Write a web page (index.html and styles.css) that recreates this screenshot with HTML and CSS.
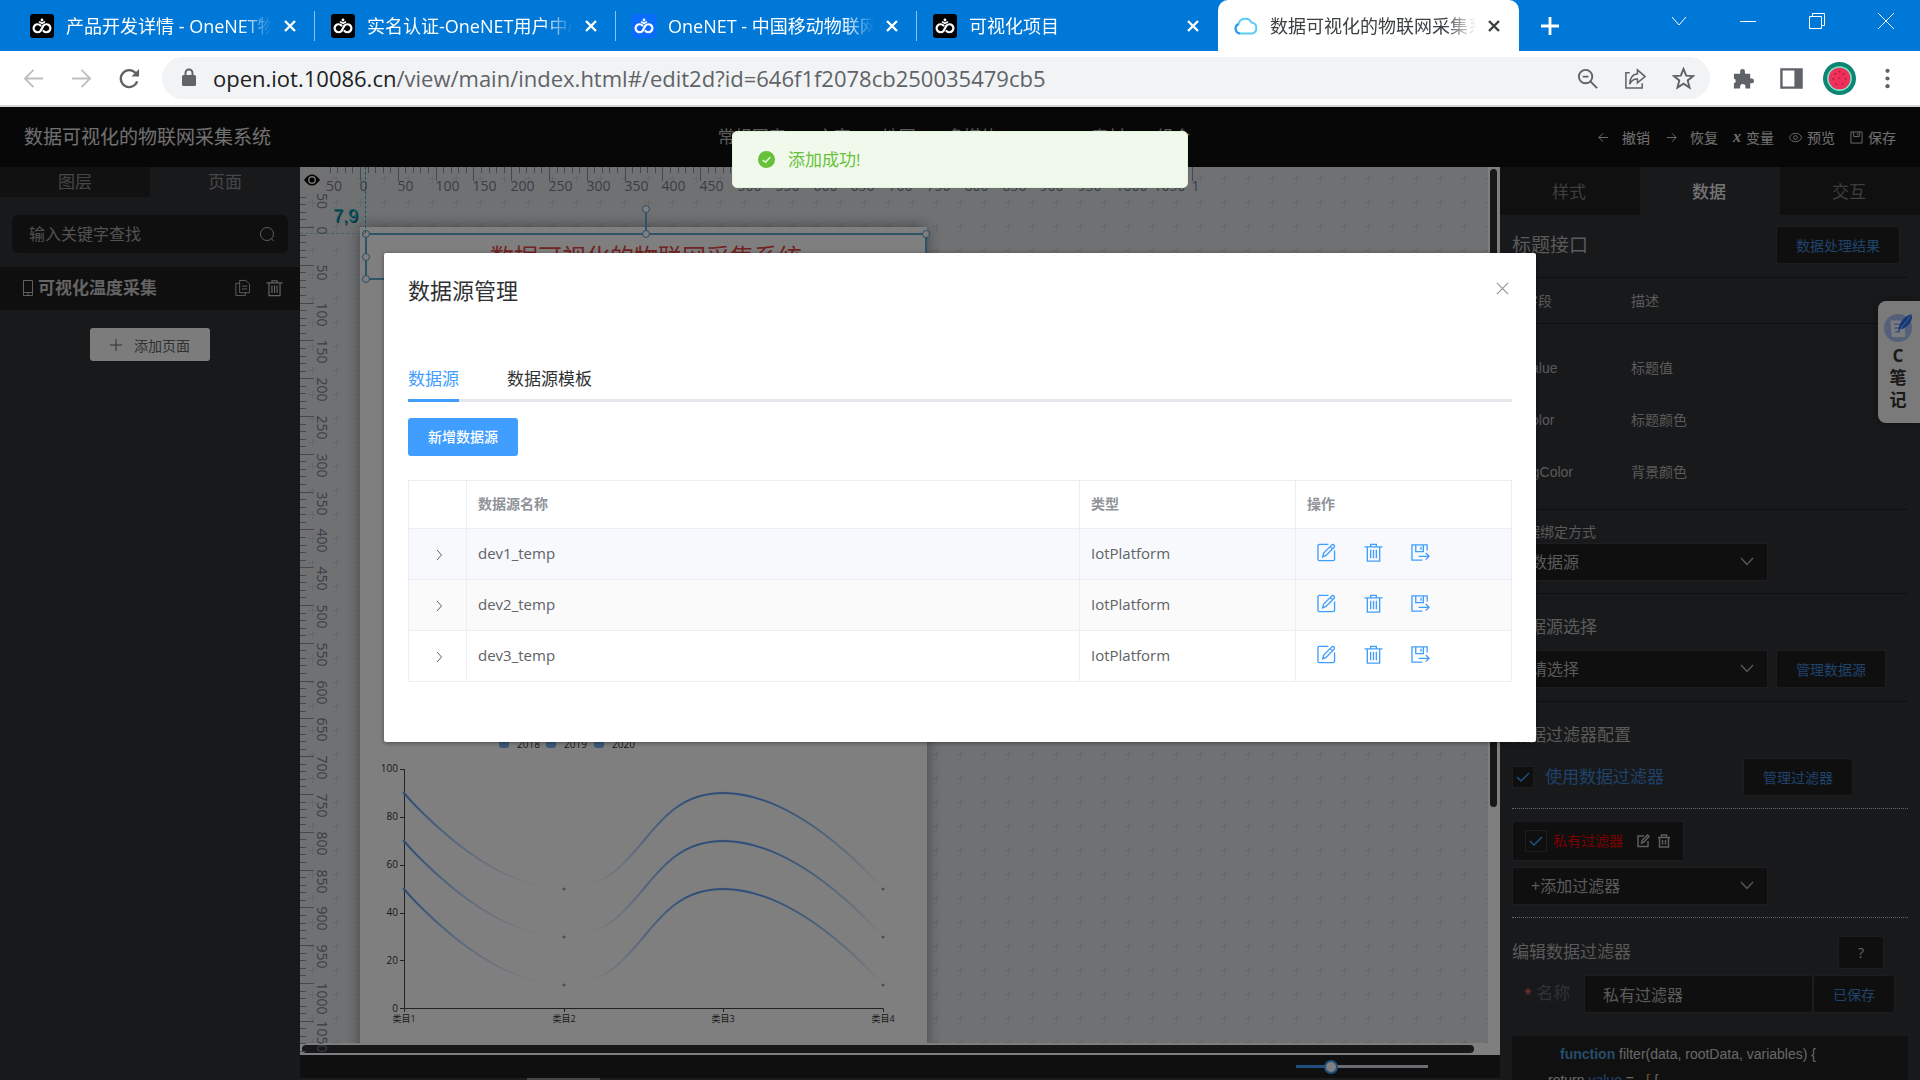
FILE: index.html
```html
<!DOCTYPE html>
<html lang="zh-CN">

<head>
  <meta charset="UTF-8" />
  <meta name="viewport" content="width=device-width, initial-scale=1.0" />
  <title>数据可视化的物联网采集系统</title>
  <link rel="stylesheet" href="styles.css">
</head>

<body>

  <!-- Shared icons -->
  <svg class="sprite" aria-hidden="true">
    <symbol id="i-onenet" viewBox="0 0 24 24">
      <g fill="none" stroke="#fff" stroke-width="2.2" stroke-linecap="round">
        <path d="M10.5 11.5A4 4 0 1 0 10.5 17L13.500 11.500A4 4 0 1 1 13.500 17" />
        <path d="M9.500 8L12 9.500L14.500 8" stroke-width="1.500" />
      </g>
      <circle cx="12" cy="6" r="1.400" fill="#fff" />
    </symbol>
    <symbol id="i-close" viewBox="0 0 16 16">
      <path d="M3 3L13 13M13 3L3 13" fill="none" stroke="currentColor" stroke-width="2.4" />
    </symbol>
    <symbol id="i-thin-close" viewBox="0 0 16 16">
      <path d="M1 1L15 15M15 1L1 15" fill="none" stroke="currentColor" stroke-width="1.4" />
    </symbol>
    <symbol id="i-edit" viewBox="0 0 20 20">
      <g fill="none" stroke="currentColor" stroke-width="1.400">
        <path d="M12 1.500H2.500A1.500 1.500 0 0 0 1 3V17A1.500 1.500 0 0 0 2.500 18.500H17A1.500 1.500 0 0 0 18.500 17V8" />
        <path d="M6 14.500L7 10.500L15.500 2Q17 1 18 2.200Q19 3.500 18 4.500L9.500 13ZM14 3.800L16.500 6.200" />
      </g>
    </symbol>
    <symbol id="i-trash" viewBox="0 0 20 20">
      <path d="M0.500 4H19.500M7 4V1.500H13V4M3.500 4V19H16.500V4M7 7V16M10 7V16M13 7V16" fill="none" stroke="currentColor" stroke-width="1.400" />
    </symbol>
    <symbol id="i-export" viewBox="0 0 20 20">
      <path d="M17 8V2H1V18H12M5 2V9H13V2M10.500 4V7M8 14H19M15.500 10.500L19 14L15.500 17.500" fill="none" stroke="currentColor" stroke-width="1.400" />
    </symbol>
    <symbol id="i-right" viewBox="0 0 12 12">
      <path d="M4 1L8.500 6L4 11" fill="none" stroke="currentColor" stroke-width="1" />
    </symbol>
  </svg>

  <!-- Browser window -->
  <header class="browser">
    <div class="tab-strip">
      <div class="tab">
        <svg class="favicon"><use href="#i-onenet" /></svg>
        <span class="tab-title">产品开发详情 - OneNET物联网</span>
        <button class="tab-close" aria-label="关闭"><svg><use href="#i-close" /></svg></button>
      </div>
      <div class="tab">
        <svg class="favicon"><use href="#i-onenet" /></svg>
        <span class="tab-title">实名认证-OneNET用户中心</span>
        <button class="tab-close" aria-label="关闭"><svg><use href="#i-close" /></svg></button>
      </div>
      <div class="tab">
        <svg class="favicon blue"><use href="#i-onenet" /></svg>
        <span class="tab-title">OneNET - 中国移动物联网开放平台</span>
        <button class="tab-close" aria-label="关闭"><svg><use href="#i-close" /></svg></button>
      </div>
      <div class="tab last">
        <svg class="favicon"><use href="#i-onenet" /></svg>
        <span class="tab-title">可视化项目</span>
        <button class="tab-close" aria-label="关闭"><svg><use href="#i-close" /></svg></button>
      </div>
      <div class="tab active">
        <svg class="favicon cloud" viewBox="0 0 24 24">
          <path d="M6 19.500A5 5 0 0 1 4.500 10A7 7 0 0 1 17.500 8.500A5.600 5.600 0 0 1 18 19.500Z" fill="#fff" stroke="#5ccbf7" stroke-width="2" />
          <path d="M6 19.500A5 5 0 0 1 4.500 10" fill="none" stroke="#2a9df4" stroke-width="2" />
        </svg>
        <span class="tab-title">数据可视化的物联网采集系统</span>
        <button class="tab-close" aria-label="关闭"><svg><use href="#i-close" /></svg></button>
      </div>
      <button class="new-tab" aria-label="新标签页">
        <svg viewBox="0 0 18 18"><path d="M9 0V18M0 9H18" stroke="#fff" stroke-width="2.800" /></svg>
      </button>
      <div class="window-buttons">
        <button aria-label="搜索标签页"><svg viewBox="0 0 16 16"><path d="M1 4L8 12L15 4" /></svg></button>
        <button aria-label="最小化"><svg viewBox="0 0 16 16"><path d="M0 8.500H16" /></svg></button>
        <button aria-label="还原"><svg viewBox="0 0 16 16"><path d="M0.500 3.500H12.500V15.500H0.500ZM3.500 3.500V0.500H15.500V12.500H12.500" /></svg></button>
        <button aria-label="关闭窗口"><svg viewBox="0 0 16 16"><path d="M0 0L16 16M16 0L0 16" /></svg></button>
      </div>
    </div>
    <div class="toolbar">
      <button class="tool muted" aria-label="后退"><svg viewBox="0 0 24 24"><path d="M22 12H3M12 3L3 12L12 21" /></svg></button>
      <button class="tool muted" aria-label="前进"><svg viewBox="0 0 24 24"><path d="M2 12H21M12 3L21 12L12 21" /></svg></button>
      <button class="tool" aria-label="刷新"><svg viewBox="0 0 24 24"><path d="M20 15A8.800 8.800 0 1 1 18.500 6.500L21 9" stroke-width="2.400" /><path d="M22 2V10H14Z" fill="currentColor" stroke="none" /></svg></button>
      <div class="address">
        <svg class="lock" viewBox="0 0 16 20"><rect x="1" y="7" width="14" height="11" rx="1.500" fill="#5f6368" /><path d="M4.500 8V5A3.500 3.500 0 0 1 11.500 5V8" fill="none" stroke="#5f6368" stroke-width="2" /></svg>
        <span class="url"><b>open.iot.10086.cn</b>/view/main/index.html#/edit2d?id=646f1f2078cb250035479cb5</span>
        <button class="tool" aria-label="缩放"><svg viewBox="0 0 24 24"><circle cx="10" cy="10" r="7" /><path d="M15 15L22 22M7 10H13" /></svg></button>
        <button class="tool" aria-label="分享"><svg viewBox="0 0 24 24"><path d="M6 6H2V22H19V17" stroke-width="1.600" /><path d="M14 3L22 10L14 16.500V12.500Q8 12.500 6 18Q6 8 14 7Z" stroke-width="1.600" /></svg></button>
        <button class="tool" aria-label="收藏"><svg viewBox="0 0 24 24"><path d="M12 2L14.800 9L22 9.500L16.400 14L18.300 21.500L12 17.300L5.700 21.500L7.600 14L2 9.500L9.200 9Z" /></svg></button>
      </div>
      <button class="tool" aria-label="扩展程序"><svg viewBox="0 0 24 24"><path d="M2 7H8.500V4.500A2.500 2.500 0 0 1 13.500 4.500V7H19V12H20.500A2.500 2.500 0 0 1 20.500 17H19V22.500H14V20.500A2.500 2.500 0 0 0 8.500 20.500V22.500H2V17A2.600 2.600 0 0 0 2 12Z" fill="currentColor" stroke="none" /></svg></button>
      <button class="tool" aria-label="侧边栏"><svg viewBox="0 0 24 24"><path d="M1.500 2.500H22.500V21.500H1.500ZM17.500 3V21" stroke-width="2.500" /><path d="M15 3H22V21H15Z" fill="currentColor" stroke="none" /></svg></button>
      <button class="tool" aria-label="个人资料">
        <svg class="avatar" viewBox="0 0 32 32"><circle cx="16" cy="16" r="16" fill="#0b8574" stroke="none" /><circle cx="16" cy="16" r="12" fill="#7fe6c6" stroke="none" /><circle cx="16" cy="16" r="10.500" fill="#f0305a" stroke="none" /><path d="M12 11V12M16 9V10M20 11V12M10 16V17M22 16V17M13 21V22M19 21V22M16 15V16" stroke="#7a1430" stroke-width="1.500" /></svg>
      </button>
      <button class="tool" aria-label="菜单"><svg viewBox="0 0 24 24"><g fill="currentColor" stroke="none"><circle cx="12" cy="4" r="2.200" /><circle cx="12" cy="12" r="2.200" /><circle cx="12" cy="20" r="2.200" /></g></svg></button>
    </div>
  </header>

  <div class="app">
    <header class="app-header">
      <h1>数据可视化的物联网采集系统</h1>
      <nav class="component-nav">
        <a href="#">常规图表</a>
        <a href="#">文字</a>
        <a href="#">地图</a>
        <a href="#">多媒体</a>
        <a href="#">WW</a>
        <a href="#">素材</a>
        <a href="#">组合</a>
      </nav>
      <div class="app-actions">
        <button><svg viewBox="0 0 14 14"><path d="M12 7H2M6.500 2.500L2 7L6.500 11.500" /></svg><span class="wide">撤销</span></button>
        <button><svg viewBox="0 0 14 14"><path d="M2 7H12M7.500 2.500L12 7L7.500 11.500" /></svg><span class="wide">恢复</span></button>
        <button><i>x</i>变量</button>
        <button><svg viewBox="0 0 14 14"><ellipse cx="7" cy="7" rx="6.300" ry="4.500" /><circle cx="7" cy="7" r="2" /></svg>预览</button>
        <button><svg viewBox="0 0 14 14"><path d="M1 1H13V13H1ZM4 1V6H10V1M8 2.500V4.500" /></svg>保存</button>
      </div>
    </header>

    <main class="workspace">
      <!-- Page list -->
      <aside class="pages">
        <div class="page-tabs">
          <button>图层</button>
          <button class="active">页面</button>
        </div>
        <div class="search">
          <input type="text" placeholder="输入关键字查找" aria-label="输入关键字查找">
          <svg viewBox="0 0 16 16"><circle cx="8" cy="8" r="6.500" /><path d="M12 12L14.500 15" /></svg>
        </div>
        <div class="page-item">
          <svg class="phone" viewBox="0 0 10 16"><path d="M0.500 0.500H9.500V15.500H0.500ZM0.500 12.500H9.500M4 14H6" /></svg>
          <strong>可视化温度采集</strong>
          <button aria-label="复制"><svg viewBox="0 0 18 18"><path d="M6 1H12.500L16.500 5V14H6ZM6 4H2V17H12V14M8.500 7H14M8.500 10H14" /></svg></button>
          <button aria-label="删除"><svg><use href="#i-trash" /></svg></button>
        </div>
        <button class="add-page"><svg viewBox="0 0 12 12"><path d="M6 0V12M0 6H12" /></svg>添加页面</button>
      </aside>

      <!-- Canvas -->
      <section class="stage">
        <div class="stage-view">
          <div class="canvas">
            <div class="paper">
              <svg class="chart" viewBox="0 0 567 320" role="img" aria-label="折线图">
                <defs>
                  <linearGradient id="fade" x1="0" y1="0" x2="0" y2="1">
                    <stop offset="0" stop-color="#5a9cf0" />
                    <stop offset="1" stop-color="#5a9cf0" stop-opacity="0" />
                  </linearGradient>
                </defs>
                <g class="legend">
                  <rect x="139" y="9" width="10" height="13" rx="3" /><text x="157" y="22">2018</text>
                  <rect x="186" y="9" width="10" height="13" rx="3" /><text x="204" y="22">2019</text>
                  <rect x="234" y="9" width="10" height="13" rx="3" /><text x="252" y="22">2020</text>
                </g>
                <path class="axis" d="M44.500 43V282.500H523.500M40 43.500H44M40 91.500H44M40 139.500H44M40 187.500H44M40 234.500H44M40 282.500H44M44.500 283V286M204.500 283V286M363.500 283V286M523.500 283V286" />
                <g class="y-labels">
                  <text x="38" y="46">100</text>
                  <text x="38" y="94">80</text>
                  <text x="38" y="142">60</text>
                  <text x="38" y="190">40</text>
                  <text x="38" y="238">20</text>
                  <text x="38" y="286">0</text>
                </g>
                <g class="x-labels">
                  <text x="44" y="296">类目1</text>
                  <text x="204" y="296">类目2</text>
                  <text x="363" y="296">类目3</text>
                  <text x="523" y="296">类目4</text>
                </g>
                <g class="lines">
                  <path d="M44 67C44 67 124 163 204 163S283 67 363 67S523 163 523 163" />
                  <path d="M44 115C44 115 124 211 204 211S283 115 363 115S523 211 523 211" />
                  <path d="M44 163C44 163 124 259 204 259S283 163 363 163S523 259 523 259" />
                </g>
                <g class="dots">
                  <circle cx="44" cy="67" r="1.500" /><circle cx="204" cy="163" r="1.500" /><circle cx="363" cy="67" r="1.500" /><circle cx="523" cy="163" r="1.500" />
                  <circle cx="44" cy="115" r="1.500" /><circle cx="204" cy="211" r="1.500" /><circle cx="363" cy="115" r="1.500" /><circle cx="523" cy="211" r="1.500" />
                  <circle cx="44" cy="163" r="1.500" /><circle cx="204" cy="259" r="1.500" /><circle cx="363" cy="163" r="1.500" /><circle cx="523" cy="259" r="1.500" />
                </g>
              </svg>
              <div class="selected-item">
                数据可视化的物联网采集系统
                <i class="handle tl"></i><i class="handle ml"></i><i class="handle bl"></i>
                <i class="handle tm"></i><i class="handle rotate"></i><i class="handle tr"></i>
              </div>
            </div>
            <div class="guide-x"></div>
            <div class="guide-y"></div>
            <span class="coords">7,9</span>
          </div>
          <div class="scroll-y"><div class="thumb"></div></div>
          <div class="scroll-x"><div class="thumb"></div></div>
          <svg class="ruler ruler-x"></svg>
          <svg class="ruler ruler-y"></svg>
          <button class="ruler-toggle" aria-label="显示标尺">
            <svg viewBox="0 0 16 12"><path d="M0 6Q8 -5 16 6Q8 17 0 6Z" /><circle cx="8" cy="6" r="4" fill="#e1e3e6" /><circle cx="8" cy="6" r="2.500" /></svg>
          </button>
        </div>
        <div class="stage-footer">
          <input type="range" min="0" max="100" value="24" aria-label="缩放">
        </div>
        <div class="stage-edge"></div>
      </section>

      <!-- Settings -->
      <aside class="settings">
        <div class="settings-tabs">
          <button>样式</button>
          <button class="active">数据</button>
          <button>交互</button>
        </div>
        <div class="settings-body">
          <div class="settings-head">
            <h2>标题接口</h2>
            <button class="dark-btn">数据处理结果</button>
          </div>
          <table class="fields">
            <thead>
              <tr><th>字段</th><th>描述</th></tr>
            </thead>
            <tbody>
              <tr><td>value</td><td>标题值</td></tr>
              <tr><td>color</td><td>标题颜色</td></tr>
              <tr><td>bgColor</td><td>背景颜色</td></tr>
            </tbody>
          </table>
          <div class="group bind">
            <label for="bind">数据绑定方式</label>
            <select id="bind"><option>数据源</option></select>
          </div>
          <div class="group source">
            <label class="big" for="source">数据源选择</label>
            <div class="line">
              <select id="source"><option>请选择</option></select>
              <button class="dark-btn">管理数据源</button>
            </div>
          </div>
          <div class="group filters">
            <h3>数据过滤器配置</h3>
            <div class="line spread">
              <label class="check"><input type="checkbox" checked>使用数据过滤器</label>
              <button class="dark-btn">管理过滤器</button>
            </div>
          </div>
          <div class="group filter-list">
            <div class="filter-item">
              <label class="check"><input type="checkbox" checked>私有过滤器</label>
              <button aria-label="编辑"><svg viewBox="0 0 14 14"><path d="M8 2H2V12.500H12V7M5.500 9L6 6.500L11.500 1L13 2.500L7.500 8.500Z" /></svg></button>
              <button aria-label="删除"><svg viewBox="0 0 14 14"><path d="M1 3.500H13M4.500 3V1H9.500V3M2.500 3.500V13H11.500V3.500M5.500 6V10.500M8.500 6V10.500" /></svg></button>
            </div>
            <select aria-label="添加过滤器"><option>+添加过滤器</option></select>
          </div>
          <div class="group editor">
            <div class="editor-head">
              <h3>编辑数据过滤器</h3>
              <button class="dark-btn help">?</button>
            </div>
            <div class="name-row">
              <label for="filter-name"><em>*</em> 名称</label>
              <input id="filter-name" type="text" value="私有过滤器">
              <button class="dark-btn">已保存</button>
            </div>
            <div class="code">
              <p><b>function</b> filter(data, rootData, variables) {</p>
              <p class="inner">return <span>value</span> = <em>[</em> {</p>
            </div>
          </div>
        </div>
      </aside>
    </main>

    <div class="note-widget">
      <svg viewBox="0 0 32 32"><circle cx="16" cy="17" r="15" fill="#a9bff5" /><path d="M8 9H22L24 25Q24 27 22 27H11Q9 27 9 25Z" fill="#f2f6ff" /><path d="M12 13H19M12 17H18M13 21H18" stroke="#8fa6e8" stroke-width="1.500" /><path d="M31 2Q32 14 18 19L16 22Q17 6 31 2Z" fill="#2c6bf0" /><path d="M31 2L18 19" stroke="#a9d4ff" /></svg>
      <span>C</span><span>笔</span><span>记</span>
    </div>

    <!-- Data source dialog -->
    <div class="mask">
      <div class="dialog" role="dialog" aria-label="数据源管理">
        <div class="dialog-head">
          <h2>数据源管理</h2>
          <button aria-label="关闭"><svg><use href="#i-thin-close" /></svg></button>
        </div>
        <div class="dialog-tabs">
          <button class="active">数据源</button>
          <button>数据源模板</button>
        </div>
        <button class="primary">新增数据源</button>
        <table class="sources">
          <colgroup><col class="c-expand"><col><col class="c-type"><col class="c-type"></colgroup>
          <thead>
            <tr><th></th><th>数据源名称</th><th>类型</th><th>操作</th></tr>
          </thead>
          <tbody>
            <tr class="hover">
              <td class="expand"><button aria-label="展开"><svg><use href="#i-right" /></svg></button></td>
              <td>dev1_temp</td>
              <td>IotPlatform</td>
              <td><div class="ops"><button aria-label="编辑"><svg><use href="#i-edit" /></svg></button><button aria-label="删除"><svg><use href="#i-trash" /></svg></button><button aria-label="导出"><svg><use href="#i-export" /></svg></button></div></td>
            </tr>
            <tr class="striped">
              <td class="expand"><button aria-label="展开"><svg><use href="#i-right" /></svg></button></td>
              <td>dev2_temp</td>
              <td>IotPlatform</td>
              <td><div class="ops"><button aria-label="编辑"><svg><use href="#i-edit" /></svg></button><button aria-label="删除"><svg><use href="#i-trash" /></svg></button><button aria-label="导出"><svg><use href="#i-export" /></svg></button></div></td>
            </tr>
            <tr>
              <td class="expand"><button aria-label="展开"><svg><use href="#i-right" /></svg></button></td>
              <td>dev3_temp</td>
              <td>IotPlatform</td>
              <td><div class="ops"><button aria-label="编辑"><svg><use href="#i-edit" /></svg></button><button aria-label="删除"><svg><use href="#i-trash" /></svg></button><button aria-label="导出"><svg><use href="#i-export" /></svg></button></div></td>
            </tr>
          </tbody>
        </table>
      </div>
    </div>

    <div class="toast" role="alert">
      <svg viewBox="0 0 18 18"><circle cx="9" cy="9" r="9" fill="#67c23a" /><path d="M5 9.500L8 12L13 6.500" fill="none" stroke="#f0f9eb" stroke-width="1.500" /></svg>
      添加成功!
    </div>
  </div>

  <script src="script.js"></script>
</body>

</html>
```
FILE: styles.css
```css
:root {
  --chrome-blue: #0078d7;
  --blue: #409eff;
  --panel: #303236;
  --panel-dark: #1e1e1f;
  --line: #1f1f20;
  --border: #ebeef5;
}

* {
  margin: 0;
  padding: 0;
  box-sizing: border-box;
}

body {
  height: 100vh;
  display: flex;
  flex-direction: column;
  overflow: hidden;
  font-family: "Open Sans", "Noto Sans CJK SC", sans-serif;
  font-size: 14px;
  line-height: 20px;
  background-color: #0e0e0e;
}

button,
input,
select {
  font-family: inherit;
  border: none;
  background: none;
  color: inherit;
  outline: none;
}

button {
  cursor: pointer;
}

svg {
  display: block;
  flex: none;
}

.sprite {
  position: absolute;
  width: 0;
  height: 0;
}

/* Browser window */
.tab-strip {
  display: flex;
  height: 51px;
  padding-left: 14px;
  background-color: var(--chrome-blue);
}

.tab {
  display: flex;
  align-items: center;
  width: 301px;
  padding: 0 17px 0 16px;
  color: white;
  position: relative;
}

.tab::after {
  content: "";
  position: absolute;
  right: 0;
  top: 11px;
  width: 1px;
  height: 30px;
  background-color: #8cc4f0;
}

.tab.last::after,
.tab.active::after {
  display: none;
}

.tab.active {
  background-color: white;
  color: #3c4043;
  border-radius: 10px 10px 0 0;
}

.favicon {
  width: 24px;
  height: 24px;
  margin-right: 12px;
  border-radius: 3px;
  background-color: black;
}

.favicon.blue {
  background-color: #0a6cff;
}

.favicon.cloud {
  background: none;
}

.tab-title {
  flex: 1;
  min-width: 0;
  overflow: hidden;
  white-space: nowrap;
  font-size: 18px;
  line-height: 28px;
  mask-image: linear-gradient(to right, black 85%, transparent);
}

.tab-close {
  width: 16px;
  height: 16px;
  margin-left: 10px;
}

.tab-close svg {
  width: 16px;
  height: 16px;
}

.new-tab {
  width: 66px;
  padding-left: 22px;
}

.new-tab svg {
  width: 18px;
  height: 18px;
}

.window-buttons {
  display: flex;
  margin-left: auto;
  height: 42px;
}

.window-buttons button {
  width: 69px;
  display: flex;
  align-items: center;
  justify-content: center;
}

.window-buttons svg {
  width: 16px;
  height: 16px;
  fill: none;
  stroke: white;
}

.toolbar {
  display: flex;
  align-items: center;
  height: 56px;
  padding: 0 9px;
  background-color: white;
  border-bottom: 2px solid #d5d8da;
}

.tool {
  width: 48px;
  height: 40px;
  flex: none;
  display: flex;
  align-items: center;
  justify-content: center;
  color: #5f6368;
}

.tool.muted {
  color: #bdbfc2;
}

.tool svg {
  width: 23px;
  height: 23px;
  fill: none;
  stroke: currentColor;
  stroke-width: 2;
}

.tool .avatar {
  width: 33px;
  height: 33px;
}

.address {
  flex: 1;
  display: flex;
  align-items: center;
  height: 42px;
  margin: 0 9px;
  padding: 0 3px 0 19px;
  border-radius: 21px;
  background-color: #f1f3f4;
}

.lock {
  width: 16px;
  height: 20px;
  margin-right: 16px;
}

.url {
  flex: 1;
  color: #5f6368;
  font-size: 22px;
  line-height: 30px;
}

.url b {
  color: #202124;
  font-weight: 400;
}

/* App header */
.app {
  flex: 1;
  min-height: 0;
  display: flex;
  flex-direction: column;
  position: relative;
}

.app-header {
  display: grid;
  grid-template-columns: 1fr auto 1fr;
  align-items: center;
  height: 60px;
  flex: none;
  padding: 0 24px;
  background-color: #0e0e0e;
  color: #e0e0e0;
}

.app-header h1 {
  font-size: 19px;
  font-weight: 400;
}

.component-nav {
  display: flex;
  gap: 31px;
  margin-right: 12px;
}

.component-nav a {
  color: #b8b8b8;
  font-size: 17px;
  text-decoration: none;
}

.app-actions {
  display: flex;
  justify-content: flex-end;
  gap: 15px;
}

.app-actions button {
  display: flex;
  align-items: center;
  gap: 5px;
  font-size: 14px;
}

.app-actions .wide {
  margin-left: 7px;
}

.app-actions svg {
  width: 13px;
  height: 13px;
  fill: none;
  stroke: currentColor;
}

.app-actions i {
  font: italic bold 16px "Liberation Serif", serif;
}

.workspace {
  flex: 1;
  min-height: 0;
  display: flex;
}

/* Page list */
.pages {
  width: 300px;
  flex: none;
  background-color: var(--panel);
}

.page-tabs {
  display: flex;
  height: 30px;
}

.page-tabs button {
  flex: 1;
  font-size: 17px;
  line-height: 28px;
  background-color: #232325;
  color: #8c8c8c;
}

.page-tabs .active {
  background-color: var(--panel);
}

.search {
  display: flex;
  align-items: center;
  margin: 18px 12px 14px;
  padding: 0 13px 0 17px;
  height: 38px;
  border-radius: 6px;
  background-color: var(--panel-dark);
}

.search input {
  flex: 1;
  min-width: 0;
  font-size: 16px;
}

.search input::placeholder {
  color: #a4a4a4;
}

.search svg {
  width: 16px;
  height: 16px;
  fill: none;
  stroke: #bbb;
}

.page-item {
  display: flex;
  align-items: center;
  height: 43px;
  padding: 0 17px 2px 23px;
  background-color: var(--panel-dark);
  color: #c8c8c8;
}

.page-item .phone {
  width: 10px;
  height: 16px;
  margin-right: 5px;
}

.page-item svg {
  width: 17px;
  height: 18px;
  fill: none;
  stroke: #c0c0c0;
}

.page-item strong {
  flex: 1;
  font-size: 17px;
}

.page-item button {
  margin-left: 15px;
}

.add-page {
  display: flex;
  align-items: center;
  justify-content: center;
  gap: 12px;
  width: 120px;
  height: 33px;
  margin: 18px auto 0;
  border-radius: 3px;
  background-color: #f8f8f8;
  color: #606266;
  font-size: 14px;
}

.add-page svg {
  width: 12px;
  height: 12px;
  stroke: #606266;
}

/* Canvas */
.stage {
  flex: 1;
  min-width: 0;
  display: flex;
  flex-direction: column;
}

.stage-view {
  flex: 1;
  min-height: 0;
  display: grid;
  grid-template-columns: 1fr 12px;
  grid-template-rows: 1fr 12px;
  position: relative;
  overflow: hidden;
  background-color: #fff;
}

.canvas {
  position: relative;
  overflow: hidden;
  background-color: #e1e3e6;
  background-image: url("data:image/svg+xml,%3Csvg xmlns='http://www.w3.org/2000/svg' width='24' height='24'%3E%3Cpath d='M8 11.5H16M12.500 8V16' stroke='%23cccecf'/%3E%3C/svg%3E");
}

.paper {
  position: absolute;
  left: 60px;
  top: 60px;
  width: 567px;
  height: 1000px;
  background-color: white;
  box-shadow: 0 0 14px rgba(0, 0, 0, 0.4);
}

.selected-item {
  position: absolute;
  left: 5px;
  top: 6px;
  width: 562px;
  height: 47px;
  border: 2px solid #5fa8cf;
  text-align: center;
  font-size: 24px;
  line-height: 44px;
  color: #e64545;
}

.handle {
  position: absolute;
  width: 8px;
  height: 8px;
  border: 1px solid #4d9cc8;
  border-radius: 50%;
  background-color: white;
}

.handle.tl { left: -5px; top: -5px; }
.handle.ml { left: -5px; top: 18px; }
.handle.bl { left: -5px; bottom: -5px; }
.handle.tm { left: 275px; top: -5px; }
.handle.rotate { left: 275px; top: -30px; }
.handle.tr { right: -5px; top: -5px; }

.handle.rotate::after {
  content: "";
  position: absolute;
  left: 2px;
  top: 7px;
  width: 2px;
  height: 18px;
  background-color: #5fa8cf;
}

.chart {
  position: absolute;
  left: 0;
  top: 499px;
  width: 567px;
  height: 320px;
}

.chart text {
  font-size: 10px;
  fill: #333;
}

.chart .legend rect {
  fill: #5a9cf0;
  opacity: 0.8;
}

.chart .y-labels text {
  text-anchor: end;
}

.chart .x-labels text {
  text-anchor: middle;
  font-size: 9px;
}

.chart .axis {
  fill: none;
  stroke: #444;
}

.chart .lines path {
  fill: none;
  stroke: url(#fade);
  stroke-width: 2;
}

.chart .dots {
  fill: #7fa3cc;
}

.guide-x,
.guide-y {
  position: absolute;
}

.guide-x {
  left: 65px;
  top: 0;
  height: 66px;
  border-left: 1px dashed #1bb5cc;
}

.guide-y {
  left: 0;
  top: 66px;
  width: 65px;
  border-top: 1px dashed #86c3cd;
}

.coords {
  position: absolute;
  left: 33px;
  top: 39px;
  font: 18px/20px "Liberation Sans", sans-serif;
  color: #12b3cc;
  text-shadow: 1px 1px 0 #08525e;
}

.ruler {
  position: absolute;
  left: 0;
  top: 0;
}

.ruler-x {
  width: 899px;
  height: 26px;
}

.ruler-y {
  width: 30px;
  height: 100%;
}

.ruler path {
  stroke: #8b919c;
}

.ruler text {
  font-size: 14px;
  fill: #737c8c;
}

.ruler-toggle {
  position: absolute;
  left: 0;
  top: 0;
  width: 25px;
  height: 25px;
  padding: 0 4px;
  background-color: #e4e5e7;
}

.ruler-toggle svg {
  width: 16px;
  height: 12px;
}

.scroll-y {
  padding: 2px 3px 0 2px;
}

.scroll-y .thumb {
  height: 73%;
  border-radius: 4px;
  background-color: #303134;
}

.scroll-x {
  padding: 2px 14px 2px 2px;
}

.scroll-x .thumb {
  height: 8px;
  border-radius: 4px;
  background-color: #303134;
}

.stage-footer {
  display: flex;
  justify-content: flex-end;
  align-items: center;
  height: 23px;
  padding-right: 72px;
  background-color: var(--panel-dark);
}

.stage-footer input {
  appearance: none;
  width: 132px;
  height: 3px;
  background: linear-gradient(to right, #409eff 27%, #d8dae0 27%);
}

.stage-footer input::-webkit-slider-thumb {
  appearance: none;
  width: 14px;
  height: 14px;
  border: 2px solid #409eff;
  border-radius: 50%;
  background-color: white;
}

.stage-edge {
  height: 2px;
  background: linear-gradient(#8c8c8c, #8c8c8c) 227px 0 / 73px 2px no-repeat #3a3a3c;
}

/* Settings */
.settings {
  width: 420px;
  flex: none;
  overflow: hidden;
  background-color: var(--panel);
  color: #b4b4b4;
}

.settings-tabs {
  display: flex;
  height: 48px;
}

.settings-tabs button {
  flex: 1;
  padding: 0 2px 2px 0;
  font-size: 17px;
  background-color: #202022;
  color: #7c7c7c;
}

.settings-tabs .active {
  background-color: var(--panel);
  color: #e8e8e8;
  font-weight: 500;
}

.settings-body {
  padding: 0 12px;
}

.settings-head {
  display: flex;
  justify-content: space-between;
  align-items: center;
  height: 62px;
  padding: 0 8px 2px 0;
}

.settings-head h2 {
  font-size: 19px;
  font-weight: 400;
}

.settings h3,
.settings .big {
  font-size: 17px;
  line-height: 24px;
  font-weight: 400;
}

.dark-btn {
  flex: none;
  height: 38px;
  padding: 0 19px;
  border: 1px solid #3a3b3f;
  border-radius: 3px;
  background-color: var(--panel-dark);
  color: #3f86d6;
  font-size: 14px;
}

.fields {
  width: 100%;
  border-collapse: collapse;
  border-bottom: 1px solid var(--line);
  font-family: "Liberation Sans", "Noto Sans CJK SC", sans-serif;
  font-size: 14px;
}

.fields th,
.fields td {
  height: 52px;
  padding-left: 12px;
  text-align: left;
  font-weight: 400;
}

.fields th:first-child {
  width: 107px;
}

.fields th {
  height: 46px;
  border-top: 1px solid var(--line);
  border-bottom: 1px solid var(--line);
}

.fields tbody::before {
  content: "";
  display: block;
  height: 18px;
}

.fields tr:last-child td {
  height: 63px;
  padding-bottom: 11px;
}

.group {
  border-bottom: 1px solid var(--line);
}

.group label {
  display: block;
}

.settings select {
  appearance: none;
  display: block;
  width: 256px;
  height: 38px;
  padding-left: 18px;
  border: 1px solid #3a3b3f;
  font-size: 16px;
  background: url("data:image/svg+xml,%3Csvg xmlns='http://www.w3.org/2000/svg' width='14' height='9'%3E%3Cpath d='M1 1L7 7.500L13 1' fill='none' stroke='%23aaa' stroke-width='1.500'/%3E%3C/svg%3E") no-repeat right 13px center var(--panel-dark);
}

.line {
  display: flex;
  align-items: center;
  gap: 8px;
}

.spread {
  justify-content: space-between;
  padding-right: 55px;
}

.bind {
  padding: 12px 0;
}

.bind label {
  margin-bottom: 1px;
}

.source {
  padding: 21px 0 13px;
}

.source .line {
  margin-top: 11px;
}

.filters {
  padding: 21px 0 12px;
  border-bottom: 1px dotted #ccc;
}

.filters .line {
  margin-top: 11px;
}

.group .check {
  display: flex;
  align-items: center;
  gap: 11px;
  font-size: 17px;
  color: #3f86d6;
}

.check input {
  appearance: none;
  width: 22px;
  height: 22px;
  border: 1px solid #3a3b3f;
  background: url("data:image/svg+xml,%3Csvg xmlns='http://www.w3.org/2000/svg' width='14' height='10'%3E%3Cpath d='M1 5L5 9L13 1' fill='none' stroke='%23409eff' stroke-width='1.500'/%3E%3C/svg%3E") no-repeat center var(--panel-dark);
}

.filter-list {
  padding: 12px 0;
  border-bottom: 1px dotted #ccc;
}

.filter-item {
  display: flex;
  align-items: center;
  width: 172px;
  height: 40px;
  margin-bottom: 6px;
  padding-left: 12px;
  border: 1px solid #3a3b3f;
  background-color: var(--panel-dark);
}

.filter-item .check {
  gap: 6px;
  margin-right: 6px;
  font-size: 14px;
  color: #f20000;
}

.filter-item button {
  margin-left: 7px;
}

.filter-item svg {
  width: 14px;
  height: 14px;
  fill: none;
  stroke: #bbb;
  stroke-width: 1.5;
}

.editor {
  border: none;
}

.editor-head {
  display: flex;
  align-items: center;
  justify-content: space-between;
  padding: 18px 24px 6px 0;
}

.editor-head .help {
  width: 46px;
  height: 33px;
  padding: 0;
  color: #ccc;
}

.name-row {
  display: flex;
  align-items: center;
  padding-right: 13px;
}

.name-row label {
  width: 72px;
  padding-left: 12px;
  font-size: 17px;
  color: #606266;
}

.name-row em {
  color: #f56c6c;
  font-size: 14px;
  font-style: normal;
}

.name-row input {
  flex: 1;
  min-width: 0;
  height: 38px;
  padding-left: 18px;
  border: 1px solid #3a3b3f;
  font-size: 16px;
  background-color: var(--panel-dark);
}

.name-row .dark-btn {
  width: 82px;
}

.code {
  margin-top: 23px;
  padding: 5px 0 0 36px;
  background-color: #202022;
  font: 14px/26px "Liberation Sans", sans-serif;
  color: #d0d0d0;
}

.code p {
  padding-left: 12px;
}

.code b {
  color: #4d98d0;
}

.code .inner {
  padding-left: 0;
}

.code .inner span {
  color: #3f86d6;
}

.code .inner em {
  margin-left: 8px;
  font-style: normal;
  color: #e0a060;
}

/* Note widget */
.note-widget {
  position: absolute;
  right: 0;
  top: 194px;
  width: 42px;
  height: 122px;
  padding: 11px 2px 0 0;
  display: flex;
  flex-direction: column;
  align-items: center;
  border-radius: 8px 0 0 8px;
  background-color: #f4f4f4;
  box-shadow: 0 0 10px rgba(0, 0, 0, 0.3);
  color: #333;
  font-size: 17px;
  font-weight: 700;
  line-height: 22px;
}

.note-widget svg {
  width: 30px;
  height: 30px;
  margin-bottom: 3px;
}

/* Dialog */
.mask {
  position: absolute;
  inset: 0;
  padding-top: 146px;
  background-color: rgba(0, 0, 0, 0.5);
}

.dialog {
  width: 60%;
  margin: 0 auto;
  padding: 20px 24px 60px;
  border-radius: 2px;
  background-color: white;
  box-shadow: 0 1px 4px rgba(0, 0, 0, 0.4);
}

.dialog-head {
  display: flex;
  justify-content: space-between;
  height: 88px;
  padding-right: 3px;
}

.dialog-head h2 {
  font-size: 22px;
  line-height: 34px;
  font-weight: 400;
  color: #303133;
}

.dialog-head button {
  height: 30px;
  color: #909399;
}

.dialog-head svg {
  width: 13px;
  height: 13px;
}

.dialog-tabs {
  display: flex;
  gap: 48px;
  margin-bottom: 16px;
  box-shadow: inset 0 -3px #e4e7ed;
}

.dialog-tabs button {
  height: 41px;
  padding-bottom: 2px;
  font-size: 17px;
  line-height: 24px;
  color: #303133;
  border-bottom: 3px solid transparent;
}

.dialog-tabs .active {
  color: var(--blue);
  border-bottom-color: var(--blue);
}

.primary {
  display: block;
  height: 38px;
  width: 110px;
  padding-bottom: 2px;
  margin-bottom: 24px;
  border-radius: 3px;
  background-color: var(--blue);
  color: white;
  font-size: 14px;
  font-weight: 500;
}

.sources {
  width: 100%;
  table-layout: fixed;
  border-collapse: collapse;
  color: #606266;
}

.c-expand {
  width: 58px;
}

.c-type {
  width: 216px;
}

.sources th,
.sources td {
  height: 51px;
  padding: 0 0 2px 11px;
  border: 1px solid var(--border);
  text-align: left;
  font-size: 15px;
}

.sources th {
  height: 48px;
  font-size: 14px;
  font-weight: 700;
  color: #909399;
}

.sources .hover {
  background-color: #f7f9fc;
}

.sources .striped {
  background-color: #fafafa;
}

.sources .expand {
  padding: 2px 0 0 24px;
}

.expand svg {
  width: 12px;
  height: 12px;
}

.ops {
  display: flex;
  gap: 28px;
  padding: 0 0 2px 10px;
  color: var(--blue);
}

.ops svg {
  width: 19px;
  height: 19px;
}

/* Toast */
.toast {
  position: absolute;
  left: 50%;
  top: 24px;
  transform: translateX(-50%);
  display: flex;
  align-items: center;
  gap: 13px;
  width: 456px;
  height: 57px;
  padding-left: 25px;
  border: 1px solid #e1f3d8;
  border-radius: 5px;
  background-color: #f0f9eb;
  color: #67c23a;
  font-size: 17px;
}

.toast svg {
  width: 17px;
  height: 17px;
}
```
FILE: script.js
```js
const NS = "http://www.w3.org/2000/svg";
const STEP = 7.56; // pixels for ten units
const ZERO = 60;

function drawRuler(selector, vertical, max) {
  const ruler = document.querySelector(selector);
  const ticks = document.createElementNS(NS, "path");
  let d = "";

  for (let unit = -50; unit <= max; unit += 10) {
    const pos = Math.round(ZERO + unit / 10 * STEP) + 0.5;
    const major = unit % 50 === 0;
    const size = major ? 14 : 6;
    if (pos > 27) {
      d += vertical ? `M0 ${pos}H${size}` : `M${pos} 0V${size}`;
    }
    if (major) {
      const label = document.createElementNS(NS, "text");
      label.textContent = unit;
      if (vertical) {
        label.setAttribute("transform", `translate(17 ${pos - 1}) rotate(90)`);
      } else {
        label.setAttribute("x", pos - 1);
        label.setAttribute("y", 24);
      }
      ruler.append(label);
    }
  }
  ticks.setAttribute("d", d);
  ruler.append(ticks);
}

drawRuler(".ruler-x", false, 1100);
drawRuler(".ruler-y", true, 1090);
```
